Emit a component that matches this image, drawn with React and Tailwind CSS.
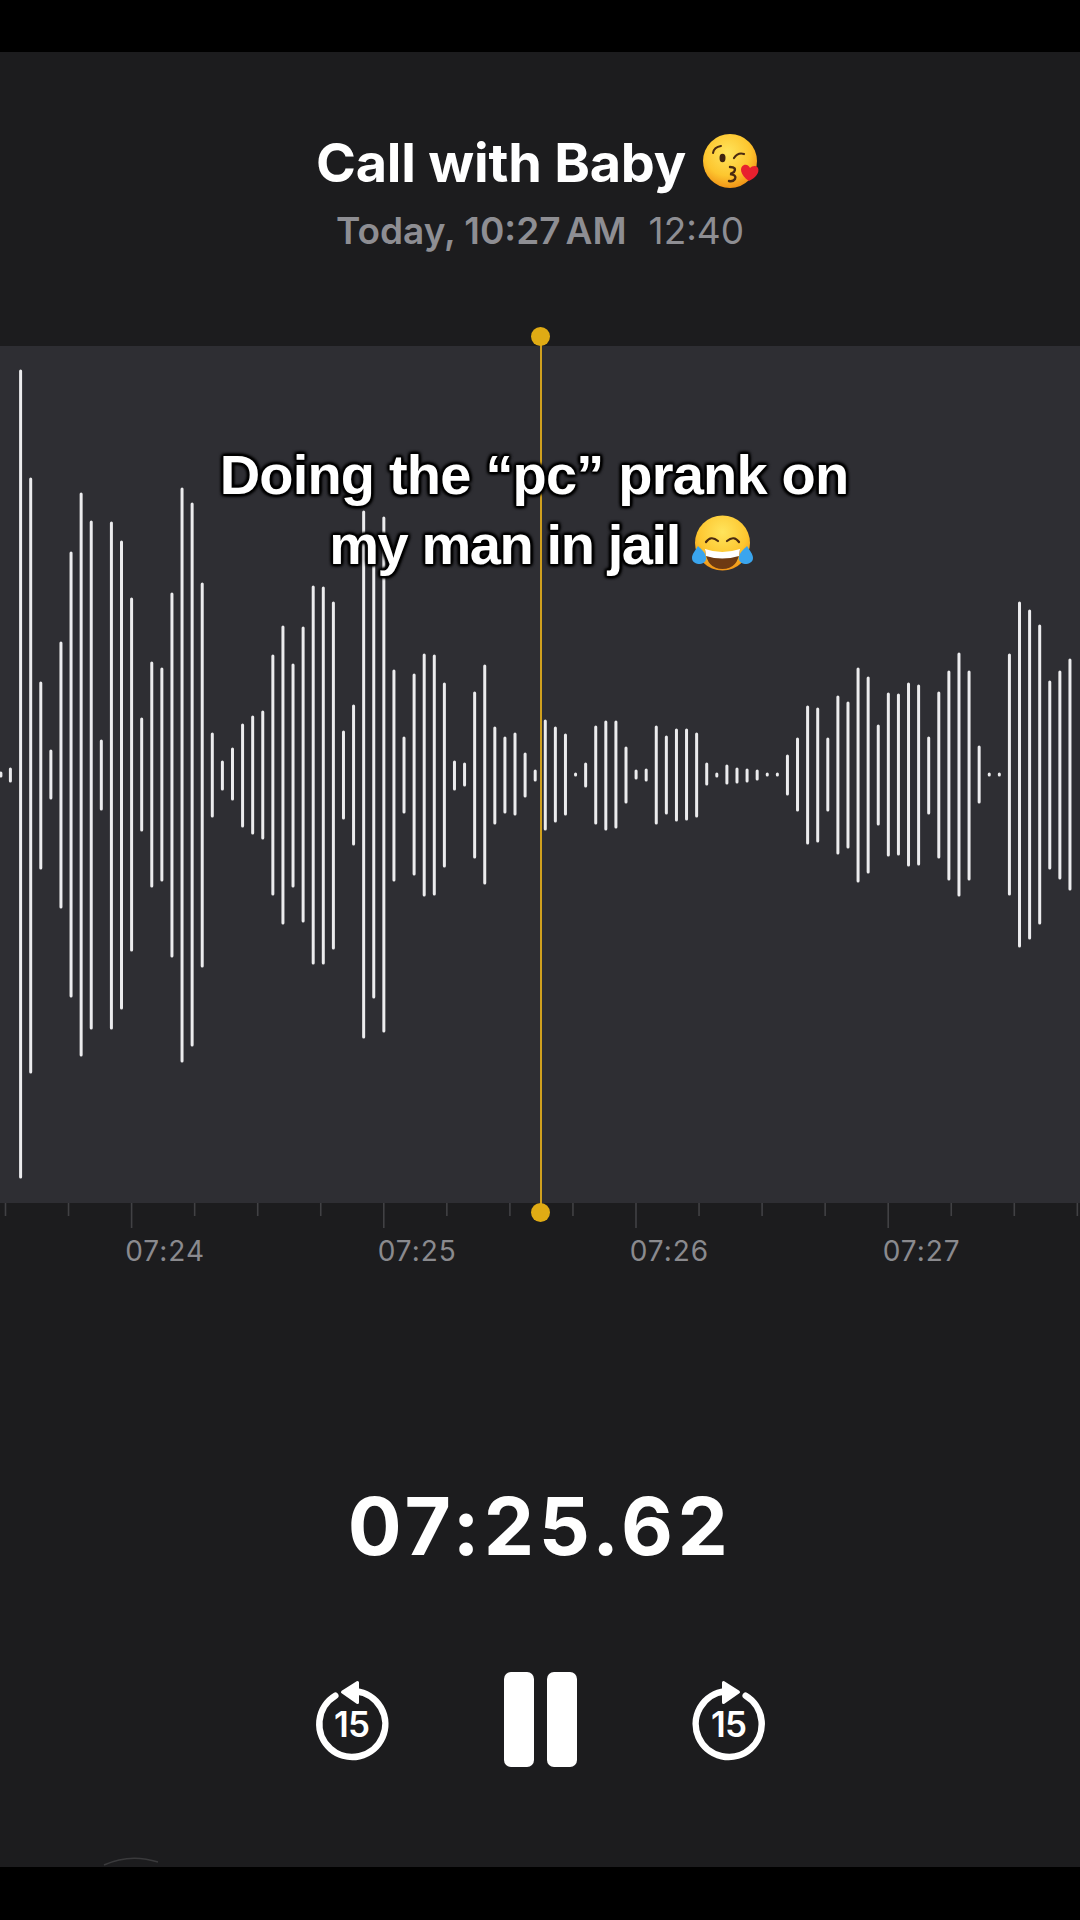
import React from "react";

const start = 20.6;
const step = 10.09;
const spans = [
  [370,1178],[478,1073],[682,869],[750,799],[642,908],[552,997],[493,1056],[521,1029],[740,810],[522,1029],
  [541,1009],[598,951],[718,831],[662,887],[668,881],[593,957],[488,1062],[503,1046],[583,967],[733,817],
  [761,790],[748,800],[724,827],[716,834],[711,839],[655,895],[626,924],[664,887],[627,922],[586,964],
  [587,964],[602,949],[731,819],[705,845],[511,1038],[552,998],[517,1032],[670,881],[737,813],[674,875],
  [654,896],[655,895],[683,867],[761,790],[763,786],[692,858],[665,884],[727,824],[737,813],[733,815],
  [753,797],[770,781],[720,830],[727,822],[734,815],[773,776],[763,787],[726,824],[721,830],[721,828],
  [747,803],[770,779],[769,781],[726,824],[736,814],[729,821],[729,820],[733,817],[763,785],[773,777],
  [765,784],[768,783],[769,782],[770,780],[773,776],[773,776],[755,795],[738,811],[706,844],[708,842],
  [738,811],[696,854],[702,848],[668,882],[677,873],[725,825],[693,856],[694,855],[683,866],[685,865],
  [737,814],[692,858],[671,880],[653,896],[671,880],[746,803],[773,776],[773,776],[654,895],[602,947],
  [610,939],[625,924],[681,869],[671,879],[659,890],
];

function Waveform() {
  const top = 346;
  return (
    <svg className="block w-full h-full" viewBox="0 0 1080 857" aria-hidden="true">
      <line x1="0.9" x2="0.9" y1={773 - top} y2={776 - top} stroke="#e9e9eb" strokeWidth="3" strokeLinecap="round" />
      <line x1="10.4" x2="10.4" y1={769 - top} y2={781 - top} stroke="#e9e9eb" strokeWidth="3" strokeLinecap="round" />
      {spans.map(([a, b], i) => {
        const x = start + step * i;
        return <line key={i} x1={x} x2={x} y1={a + 1 - top} y2={b - 1 - top} stroke="#ececee" strokeWidth="3" strokeLinecap="round" />;
      })}
    </svg>
  );
}

function Ticks() {
  const out = [];
  for (let i = 0; i < 18; i++) {
    const x = 5.5 + 63.05 * i;
    const major = (i - 2) % 4 === 0;
    out.push(<line key={i} x1={x} x2={x} y1="0" y2={major ? 25 : 13} stroke="#414144" strokeWidth="1.6" />);
  }
  return (
    <svg className="block w-full h-[28px]" viewBox="0 0 1080 28" aria-hidden="true">{out}</svg>
  );
}

function KissEmoji({ className }) {
  return (
    <svg className={className} viewBox="0 0 70 70" aria-hidden="true">
      <defs>
        <radialGradient id="kissFace" cx="45%" cy="35%" r="70%">
          <stop offset="0%" stopColor="#ffe45c" />
          <stop offset="60%" stopColor="#fdc62f" />
          <stop offset="100%" stopColor="#ee8a12" />
        </radialGradient>
      </defs>
      <circle cx="36" cy="33" r="27" fill="url(#kissFace)" />
      <path d="M19 25Q20 19 27 18" fill="none" stroke="#4a2a10" strokeWidth="2" strokeLinecap="round" />
      <ellipse cx="28.5" cy="30" rx="3" ry="4.2" fill="#3f2410" />
      <path d="M40 30Q44 24 50 26" fill="none" stroke="#4a2a10" strokeWidth="2.2" strokeLinecap="round" />
      <path d="M36 39Q43 39 40 44Q37 46 36 46Q43 47 41 51Q39 54 35 53" fill="none" stroke="#4a2a10" strokeWidth="2.4" strokeLinecap="round" />
      <path d="M55 53C46 47 45 39 50 37C53 36 55 38 56 40C58 38 62 37 64 40C66 45 61 50 55 53Z" fill="#e8202e" />
    </svg>
  );
}

function LaughEmoji({ className }) {
  return (
    <svg className={className} viewBox="0 0 70 70" aria-hidden="true">
      <defs>
        <radialGradient id="laughFace" cx="50%" cy="30%" r="75%">
          <stop offset="0%" stopColor="#ffe45c" />
          <stop offset="60%" stopColor="#fdc62f" />
          <stop offset="100%" stopColor="#ee8a12" />
        </radialGradient>
      </defs>
      <circle cx="36.5" cy="33" r="27.5" fill="url(#laughFace)" />
      <path d="M20 32Q25 25 32 31" fill="none" stroke="#4a2a10" strokeWidth="2.2" strokeLinecap="round" />
      <path d="M41 31Q48 25 53 32" fill="none" stroke="#4a2a10" strokeWidth="2.2" strokeLinecap="round" />
      <path d="M19 40Q36 46 54 40Q52 59 36.5 59Q21 59 19 40Z" fill="#6e3a12" />
      <path d="M19 39Q36 45 54 39L53 46Q36 51 20 46Z" fill="#ffffff" />
      <path d="M12 36C9 41 6 44 6 48C6 52 10 54 14 54C18 54 21 50 20 47C19 42 15 39 12 36Z" fill="#3aa5ee" />
      <path d="M61 36C64 41 67 44 67 48C67 52 63 54 59 54C55 54 52 50 53 47C54 42 58 39 61 36Z" fill="#3aa5ee" />
    </svg>
  );
}

function Skip({ forward }) {
  return (
    <div className="relative w-[84px] h-[90px] mt-[2px] shrink-0">
      <svg className="block w-full h-full" viewBox="-2 -8 84 90" aria-hidden="true">
        <g transform={forward ? "translate(80 0) scale(-1 1)" : undefined}>
          <path d="M23.3 11.7A33 33 0 1 0 44 7.2" fill="none" stroke="#ffffff" strokeWidth="6.5" strokeLinecap="round" />
          <path d="M30.5 8L45.5 -1.5L45.5 18.5Z" fill="#ffffff" stroke="#ffffff" strokeWidth="3" strokeLinejoin="round" />
        </g>
      </svg>
      <span className="absolute left-0 right-0 top-[9px] text-center text-white font-semibold text-[35px] leading-[78px] tracking-[-1px] [font-family:Inter,sans-serif]">15</span>
    </div>
  );
}

const shadow = "[text-shadow:2px_0_2px_#000,-2px_0_2px_#000,0_2px_2px_#000,0_-2px_2px_#000,2px_2px_3px_#000,-2px_-2px_3px_#000,2px_-2px_3px_#000,-2px_2px_3px_#000]";

export default function App() {
  return (
    <div className="relative w-[1080px] h-[1920px] flex flex-col bg-black overflow-hidden [font-family:Inter,sans-serif]">
      <div className="h-[52px] shrink-0 bg-black" />
      <main className="relative h-[1815px] shrink-0 flex flex-col bg-[#1c1c1e]">
        <div className="pt-[79px] flex flex-col items-center">
          <div className="flex items-center h-[64px] text-white font-bold text-[54px] leading-[64px] tracking-[-0.2px]">
            <span>Call with Baby</span>
            <KissEmoji className="w-[70px] h-[70px] ml-[8px]" />
          </div>
          <div className="mt-[14px] flex items-center gap-[22px] text-[#8e8e93] text-[37px] leading-[44px]">
            <span className="font-semibold">Today, 10:27<span className="ml-[5px]">AM</span></span>
            <span className="font-normal">12:40</span>
          </div>
        </div>

        <section className="mt-[93px] h-[857px] bg-[#2e2e33] shrink-0">
          <Waveform />
        </section>

        <Ticks />

        <div className="mt-[5px] flex pl-[39px] text-[#8a8a8e] text-[28px] leading-[30px] font-normal tracking-[1px]">
          <span className="w-[252.2px] text-center">07:24</span>
          <span className="w-[252.2px] text-center">07:25</span>
          <span className="w-[252.2px] text-center">07:26</span>
          <span className="w-[252.2px] text-center">07:27</span>
        </div>

        <div className="mt-[210px] text-center text-white font-bold text-[80px] leading-[100px] tracking-[4.4px]">07:25.62</div>

        <div className="mt-[96px] flex items-center justify-center gap-[110px]">
          <Skip />
          <div className="flex gap-[13px] shrink-0">
            <div className="w-[30px] h-[95px] rounded-[7px] bg-white" />
            <div className="w-[30px] h-[95px] rounded-[7px] bg-white" />
          </div>
          <Skip forward />
        </div>

        <svg className="absolute left-[100px] bottom-0 w-[64px] h-[12px]" viewBox="0 0 64 12" aria-hidden="true">
          <path d="M4 10Q30 -2 58 7" fill="none" stroke="#3a3a3c" strokeWidth="1.5" />
        </svg>
      </main>
      <div className="flex-1 bg-black" />

      {/* playhead */}
      <div className="absolute left-[540px] top-[337px] w-[2px] h-[875px] bg-[#d0a01e]" />
      <div className="absolute left-[531px] top-[327px] w-[19px] h-[19px] rounded-full bg-[#e0ab14]" />
      <div className="absolute left-[531px] top-[1203px] w-[19px] h-[19px] rounded-full bg-[#e0ab14]" />

      {/* caption */}
      <div className={`absolute left-0 right-0 top-[440px] flex flex-col items-center text-white text-[56px] leading-[70px] font-bold [font-family:'Liberation_Sans',Arial,sans-serif] ${shadow}`}>
        <div className="pr-[12px] tracking-[-0.8px]">Doing the “pc” prank on</div>
        <div className="flex items-center tracking-[-1.4px]">
          <span>my man in jail</span>
          <LaughEmoji className="w-[70px] h-[70px] ml-[6px] -mr-[5px]" />
        </div>
      </div>
    </div>
  );
}
